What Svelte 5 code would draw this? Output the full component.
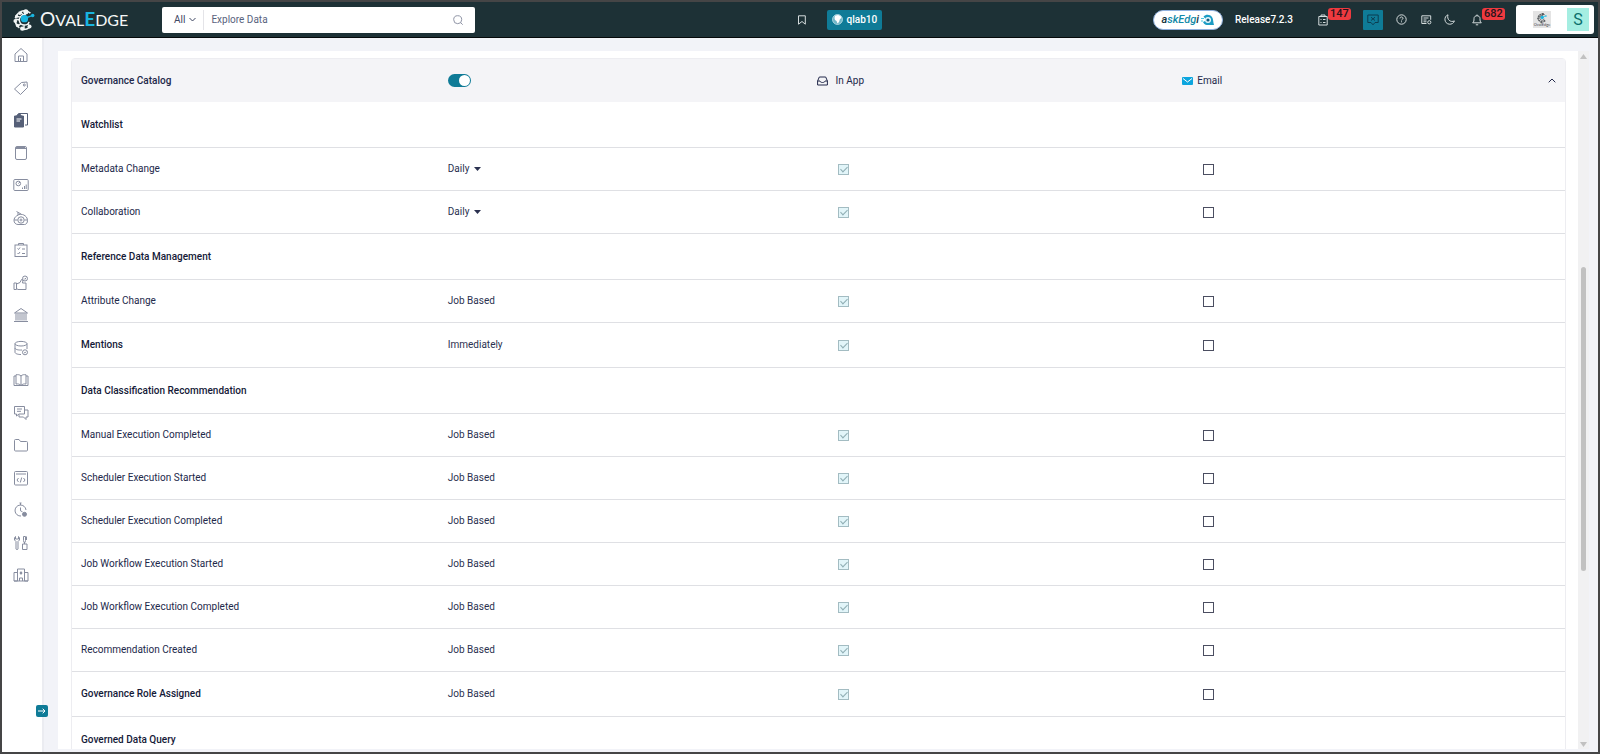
<script>
  const nav = [
    ['Home', '<path d="M2 7 8 1.5 14 7v7.5H2z"/><path d="M5.500 14.500V9h5v5.500M7.500 14V11"/>'],
    ['Tags', '<path d="M8.500 2.500 14 2l.5 5.500-7 7L1.500 9z"/><circle cx="11.300" cy="5" r="1"/>'],
    ['Data catalog', '<path d="M5.500 3V1.500h9V13H12"/><path fill="currentColor" d="M1.500 4h2l1-1.500h3L8.500 4h2v11h-9z"/><path stroke="#fff" d="M3.500 7h5M3.500 9h3.500"/>'],
    ['Glossary', '<rect x="2.500" y="1.500" width="11" height="13" rx="1.500"/><path d="M3 3.500h10M3 2.500h9"/>'],
    ['Dashboards', '<rect x=".8" y="2.500" width="14.400" height="11" rx="1"/><circle cx="5.300" cy="6.500" r="2.300"/><path d="M5.300 6.500 7 5M9.500 12v-1.500M11.500 12V9M13.200 12V7.500"/>'],
    ['Data quality', '<path d="M3.500 1.500 8 4M3.500 6 6 4.500c5-1 8.500 2.500 8.500 6 0 2-1 4-3 4H5c-2.500 0-4-2-4-4s1-3.500 2.500-4.500zM5 2.500v2.500"/><circle cx="8" cy="10" r="3.200"/><circle cx="8" cy="10" r="1"/><path d="M1 10h3.500M11.500 10h3"/>'],
    ['Projects', '<rect x="2" y="3" width="12" height="11.500"/><path d="M5.500 3V1.500h5V3M4.500 6.500l1 1 1.500-2M9 7h3M4.500 11l1 1 1.500-2M9 11.500h3"/>'],
    ['Service desk', '<path d="M1 8h2.500v6.500H1zM3.500 9 7 7.500 8.500 4.500l1.500.5-.5 3H13v6.500H5l-1.500-1"/><circle cx="12" cy="3.500" r="2.500"/><path d="m11 3.500.8.8 1.400-1.500"/>'],
    ['Governance', '<path d="M1.500 6 8 1.500 14.500 6zM1 14.500h14M3 6.500v7M5 6.500v7M7 6.500v7M9 6.500v7M11 6.500v7M13 6.500v7"/>'],
    ['Data sources', '<ellipse cx="8" cy="3.700" rx="6" ry="2.300"/><path d="M2 3.700v8.600c0 1.300 3 2.300 6 2.200M14 3.700V9M2 8c0 1.500 3.500 2.300 7 2"/><circle cx="12" cy="12.300" r="2.500"/><path d="M11 12.300l.8.700 1.200-1.300"/>'],
    ['Library', '<path d="M8 4C6.500 2.500 5 2.500 3 2.800V12c2-.3 3.500 0 5 1.500C9.500 12 11 11.700 13 12V2.800C11 2.500 9.500 2.500 8 4zM8 4v9M3 4H1v9.500h14V4h-2"/>'],
    ['Collaboration', '<path d="M1.500 1.500h10v7.500H6L3.500 11V9h-2zM11.500 5H15v7h-2v2.500L10.500 12H6V9.500"/><path d="M4 4h5M4 6.300h4"/>'],
    ['Files', '<path d="M1.500 3.500c0-.8.500-1 1-1h3.500l1.500 2h6c.7 0 1 .4 1 1v7.500c0 .7-.4 1-1 1h-11c-.6 0-1-.4-1-1z"/>'],
    ['Query sheet', '<rect x="1.500" y="1.500" width="13" height="13.500" rx="1"/><path d="M3 4h10M5.500 8 4 10l1.500 2M10.500 8l1.500 2-1.500 2M8.700 7.500 7.300 12.500"/>'],
    ['Jobs', '<path d="M13 8A5.500 5.500 0 1 0 8 14M6.500 1h2M7.500 1v2M7.500 5.500v3.300l2 1"/><circle cx="11.500" cy="12.300" r="2" fill="currentColor"/>'],
    ['Tools', '<path d="M2.500 1.500 1.500 3v2L3 6.500V14c0 .7 2 .7 2 0V6.500L6.500 5V3l-1-1.500V4h-3zM10.500 1.500h2v4l-.5 2h-1l-.5-2zM11.500 7.500V9M9.500 9H14v5.500H9.500zM13.500 1.500V5"/>'],
    ['Administration', '<path d="M4.500 14V2h7v12M1 5.500h3.500V14H1zM11.500 5.500H15V14h-3.500zM6.500 14v-3h3v3M1 14h14"/><path fill="currentColor" d="M7.300 5h1.400v2H7.300z"/>'],
  ];

  const rows = [
    { name: 'Watchlist', kind: 'group' },
    { name: 'Metadata Change', frequency: 'Daily', choose: true },
    { name: 'Collaboration', frequency: 'Daily', choose: true },
    { name: 'Reference Data Management', kind: 'group' },
    { name: 'Attribute Change', frequency: 'Job Based' },
    { name: 'Mentions', frequency: 'Immediately', kind: 'lead' },
    { name: 'Data Classification Recommendation', kind: 'group' },
    { name: 'Manual Execution Completed', frequency: 'Job Based' },
    { name: 'Scheduler Execution Started', frequency: 'Job Based' },
    { name: 'Scheduler Execution Completed', frequency: 'Job Based' },
    { name: 'Job Workflow Execution Started', frequency: 'Job Based' },
    { name: 'Job Workflow Execution Completed', frequency: 'Job Based' },
    { name: 'Recommendation Created', frequency: 'Job Based' },
    { name: 'Governance Role Assigned', frequency: 'Job Based', kind: 'lead' },
    { name: 'Governed Data Query', kind: 'group' },
  ];
</script>

{#snippet emblem(size, ink)}
  <svg width={size} height={size} viewBox="0 0 24 24" fill="none" stroke={ink} stroke-width="1.600" aria-hidden="true">
    <path d="M19 4.500A10 10 0 0 0 8 3M6 4.500A10 10 0 0 0 2.500 10M2.500 13.500A10 10 0 0 0 7 20.500M9.500 22A10 10 0 0 0 18 20"/>
    <path d="M12.500 6A6 6 0 0 0 7 13c.5 3 3 4.500 5.500 4.500 2.500 0 4.500-1.500 5-3.500M8 3l3 3.500M2.500 11 7 12M6 18l3-2M12 22v-4M18 19l-2-3M14 3l-1 4M4 8l4 1" />
    <g fill={ink} stroke="none">
      <circle cx="14" cy="3" r="2.800"/><circle cx="7.500" cy="4.500" r="2"/><circle cx="4" cy="8" r="1.800"/><circle cx="2.500" cy="13" r="2"/>
      <circle cx="5" cy="18" r="1.900"/><circle cx="10" cy="21.500" r="2.300"/><circle cx="18" cy="19" r="2.200"/>
    </g>
    <path stroke="#19b5e0" d="M12 10.500 21.500 7"/>
    <circle cx="12.500" cy="10.500" r="4" fill="#19b5e0" stroke="none"/>
    <circle cx="21.500" cy="7" r="1.900" fill="#19b5e0" stroke="none"/>
  </svg>
{/snippet}

<div class="frame">
  <header>
    <a class="brand" href="#home" aria-label="OvalEdge">
      {@render emblem(22, '#f1f5f5')}
      <span class="wordmark"><b>O</b>VAL<b class="cyan">E</b>DGE</span>
    </a>

    <form class="search" role="search">
      <button type="button" class="scope">All
        <svg width="7" height="5" viewBox="0 0 7 5" fill="none" stroke="currentColor"><path d="M.5 1l3 3 3-3"/></svg>
      </button>
      <input type="search" placeholder="Explore Data" aria-label="Explore Data" />
      <button type="button" class="find" aria-label="Search">
        <svg width="10" height="10" viewBox="0 0 10 10" fill="none" stroke="currentColor"><circle cx="4.700" cy="4.700" r="4"/><path d="M7.500 7.500 9.700 9.700"/></svg>
      </button>
    </form>

    <div class="middle">
      <button class="icon" aria-label="Bookmarks">
        <svg width="10" height="10" viewBox="0 0 10 10" fill="none" stroke="currentColor"><path d="M1.500.8h6.800v8.400L5 6.500 1.500 9.200z"/></svg>
      </button>
      <button class="tenant">
        <svg width="11" height="11" viewBox="0 0 11 11"><circle cx="5.500" cy="5.500" r="5" fill="#6fb6c8" stroke="#cfeaf0" stroke-width=".7"/><path fill="#fff" d="M3 1.800 6 1l2.500 1 1 2-1.500 1-1 3-1.500 1.500L4.500 7 3 6 2.500 4z"/></svg>
        qlab10
      </button>
    </div>

    <div class="tools">
      <button class="ask"><i>a<span>skEdg</span>i</i>
        <svg width="13" height="12" viewBox="0 0 13 12"><path fill="#1c9cc4" d="M2.500 2.500C5 0 9 .3 11 3c1.500 2 1 5 2 8H6C4 11 2.500 9.500 2 8l2-1 .5-2z"/><circle cx="7" cy="6" r="3" fill="#e8f8fc"/><circle cx="7" cy="6" r="1.600" fill="#125c80"/><path stroke="#46c7df" d="M0 4.500h3M0 7h2"/></svg>
      </button>
      <span class="release">Release7.2.3</span>
      <button class="icon tasks" aria-label="Tasks">
        <svg width="10" height="12" viewBox="0 0 10 12" fill="none" stroke="currentColor"><path d="M.8 2.500h8.400v8.500H.8zM3 2.500V1h4v1.500M2.500 5.500h1M5 5.500h2.500M2.500 8.500h1M5 8.500h2.500"/></svg>
        <span class="badge">147</span>
      </button>
      <button class="assist" aria-label="Assistant">
        <svg width="12" height="12" viewBox="0 0 12 12" fill="none" stroke="currentColor"><path d="M.8 1h10.400v7.500H8L6 10.800 4 8.500H.8zM4 3.200l4 3.300M4 6.500l4-3.300"/></svg>
      </button>
      <button class="icon help" aria-label="Help">
        <svg width="11" height="11" viewBox="0 0 11 11" fill="none" stroke="currentColor"><circle cx="5.500" cy="5.500" r="4.700"/><path d="M4 4.400c.1-2 3-1.800 3 0 0 .9-1.500 1-1.500 2M5.500 7.300v1"/></svg>
      </button>
      <button class="icon news" aria-label="Preferences">
        <svg width="11" height="10" viewBox="0 0 11 10" fill="none" stroke="currentColor"><path d="M5.500 8.500H.8V.8h8.900v4M2.500 3h5M2.500 5h3M2.500 6.800h3"/><circle cx="8.300" cy="7.300" r="1.600"/></svg>
      </button>
      <button class="icon night" aria-label="Dark mode">
        <svg width="11" height="11" viewBox="0 0 11 11" fill="none" stroke="currentColor"><path d="M4 .8C-.5 2.500 0 9.500 5.200 10.200c2.500.2 4.500-1 5.200-3.300C6.500 8.800 2.500 5.500 4 .8z"/></svg>
      </button>
      <button class="icon bell" aria-label="Notifications">
        <svg width="10" height="12" viewBox="0 0 10 12" fill="none" stroke="currentColor"><path d="M.7 8.800c1.300-1.200 1.300-2 1.300-4.300C2 .8 8 .8 8 4.500c0 2.300 0 3.100 1.300 4.300zM5 .5v1.200M3.800 10.800h2.400"/></svg>
        <span class="badge">682</span>
      </button>
      <div class="account">
        <span class="org">{@render emblem(10, '#55595c')}<small>OvalEdge</small></span>
        <button class="avatar">S</button>
      </div>
    </div>
  </header>

  <div class="body">
    <aside>
      <nav aria-label="Main">
        {#each nav as [label, art]}
          <a href="#{label}" aria-label={label} class:current={label === 'Data catalog'}>
            <svg width="16" height="16" viewBox="0 0 16 16" fill="none" stroke="currentColor">{@html art}</svg>
          </a>
        {/each}
      </nav>
      <button class="expand" aria-label="Expand menu">
        <svg width="8" height="6" viewBox="0 0 8 6" fill="none" stroke="currentColor"><path d="M0 3h7M4.700.7 7 3 4.700 5.300"/></svg>
      </button>
    </aside>

    <main>
      <div class="sheet">
        <table>
          <colgroup><col class="wide" /><col class="wide" /><col class="wide" /><col /></colgroup>
          <thead>
            <tr>
              <th scope="col">Governance Catalog</th>
              <th scope="col"><input class="switch" type="checkbox" role="switch" checked aria-label="Governance Catalog notifications" /></th>
              <th scope="col" class="channel"><span class="inapp">
                <svg width="11" height="10" viewBox="0 0 11 10" fill="none" stroke="currentColor"><path d="M.6 5 2.300 1h6.400l1.700 4v4H.6zM.6 5H3c.3 2 4.700 2 5 0h2.400"/></svg>
                In App</span></th>
              <th scope="col" class="channel"><div class="last">
                <span class="email">
                  <svg width="11" height="8" viewBox="0 0 11 8"><rect width="11" height="8" rx="1" fill="#0ca5de"/><path d="M1 1.500 5.500 5 10 1.500" fill="none" stroke="#fff"/></svg>
                  Email</span>
                <button class="fold" aria-label="Collapse section">
                  <svg width="8" height="5" viewBox="0 0 8 5" fill="none" stroke="currentColor"><path d="M.7 4.300 4 1l3.300 3.300"/></svg>
                </button>
              </div></th>
            </tr>
          </thead>
          <tbody>
            {#each rows as row}
              <tr class={row.kind}>
                {#if row.kind === 'group'}
                  <th scope="colgroup" colspan="4">{row.name}</th>
                {:else}
                  <th scope="row">{row.name}</th>
                  <td>
                    {#if row.choose}
                      <span class="pick">
                        <select aria-label="{row.name} frequency"><option>{row.frequency}</option></select>
                        <svg width="7" height="4" viewBox="0 0 7 4"><path d="M0 0h7L3.500 4z" fill="currentColor"/></svg>
                      </span>
                    {:else}{row.frequency}{/if}
                  </td>
                  <td class="tick"><input type="checkbox" checked disabled aria-label="{row.name} in app" /></td>
                  <td class="tick"><input type="checkbox" aria-label="{row.name} email" /></td>
                {/if}
              </tr>
            {/each}
          </tbody>
        </table>
      </div>
      <div class="track" aria-hidden="true">
        <svg width="7" height="5" viewBox="0 0 7 5"><path d="M0 5h7L3.500 0z" fill="#c1c1c1"/></svg>
        <div class="rail"><div class="thumb"></div></div>
        <svg width="7" height="5" viewBox="0 0 7 5"><path d="M0 0h7L3.500 5z" fill="#c1c1c1"/></svg>
      </div>
    </main>
  </div>
</div>

<style>
  :global(body) { background: #f2f3f8; }
  .frame, .frame * { box-sizing: border-box; }
  .frame {
    height: 100vh;
    display: flex;
    flex-direction: column;
    border: 2px solid #454546;
    background: #f2f3f8;
    color: #22284a;
    font: 10px/14px Roboto, sans-serif;
    overflow: hidden;
  }
  button, input, select { font: inherit; color: inherit; margin: 0; padding: 0; border: 0; background: none; }
  button { cursor: pointer; }
  svg { display: block; flex: none; }
  a { color: inherit; text-decoration: none; }

  header {
    flex: none;
    height: 36px;
    display: flex;
    align-items: center;
    background: #1d3136;
    border-bottom: 1px solid #05090a;
    color: #e3e9ea;
    padding-right: 4px;
  }
  .brand { display: flex; align-items: center; gap: 5px; width: 160px; padding-left: 11px; }
  .wordmark { font: 16px/24px Lato, sans-serif; color: #f4f7f7; }
  .wordmark b { font-size: 19px; font-weight: 400; }
  .wordmark .cyan { color: #19b5e0; font-weight: 700; }

  .search {
    width: 313px;
    height: 26px;
    display: flex;
    align-items: center;
    background: #fff;
    border-radius: 2px;
    color: #3f4763;
    padding-right: 12px;
  }
  .scope { display: flex; align-items: center; gap: 4px; height: 20px; padding: 0 7px 0 12px; border-right: 1px solid #e4e4e8; }
  .search input { flex: 1; min-width: 0; padding-left: 7px; outline: none; appearance: none; }
  .search input::placeholder { color: #59627d; opacity: 1; }
  .find { color: #9095a6; }

  .middle { flex: 1; display: flex; align-items: center; gap: 20px; }
  .middle::before { content: ''; flex: 30; }
  .middle::after { content: ''; flex: 25; }
  .tenant { display: flex; align-items: center; gap: 4px; height: 20px; padding: 0 5px; border-radius: 2px; background: #0f7b97; color: #fff; font-weight: 500; }
  .tools { display: flex; align-items: center; }
  .ask { display: flex; align-items: center; gap: 2px; height: 20px; padding: 0 8px 0 7px; border-radius: 10px; border: 1px solid #8fb0dd; background: #fff; color: #15323c; font-size: 11px; font-weight: 500; }
  .ask span { color: #128aa8; }
  .release { margin: 0 25px 0 12px; color: #fff; font-weight: 500; }
  .icon { position: relative; color: #d5dcdd; }
  .badge { position: absolute; left: 10px; top: -6px; height: 12px; padding: 0 2px; border-radius: 3px; background: #ee3a3f; color: #27141d; font-size: 11px; font-weight: 500; line-height: 12px; }
  .assist { display: grid; place-items: center; width: 20px; height: 20px; margin-left: 35px; border-radius: 1px; background: #0f7b97; color: #0b3d50; }
  .help { margin-left: 13px; }
  .news { margin-left: 14px; }
  .night { margin-left: 12px; }
  .bell { margin-left: 17px; }
  .account { display: flex; align-items: center; gap: 16px; height: 29px; margin-left: 34px; padding: 0 5px 0 17px; border-radius: 3px; background: #fff; }
  .org { display: flex; flex-direction: column; align-items: center; width: 18px; height: 17px; padding-top: 2px; background: #e4e4e4; color: #44484c; }
  .org small { font: 4px/4px Lato, sans-serif; }
  .avatar { width: 22px; height: 23px; background: #a5eee2; color: #0b6e6b; font-size: 16px; }

  .body { flex: 1; min-height: 0; display: flex; }
  aside { position: relative; flex: none; width: 42px; background: #fff; border-right: 2px solid #ebecf1; }
  nav { display: flex; flex-direction: column; padding-top: 1px; }
  nav a { display: grid; place-items: center; height: 32px; padding-right: 2px; color: #878d9f; }
  nav a:nth-child(even) { height: 33px; }
  nav a.current { color: #566078; }
  .expand { position: absolute; right: -6px; bottom: 35px; display: grid; place-items: center; width: 12px; height: 12px; border-radius: 2px; background: #0f7b97; color: #fff; }

  main { flex: 1; min-width: 0; display: flex; margin: 13px 9px 3px 14px; }
  .sheet { flex: 1; min-width: 0; overflow: hidden; padding: 7px 12px 0 13px; background: #fff; }
  table { width: 100%; table-layout: fixed; border-collapse: separate; border-spacing: 0; border: 1px solid #ededf1; border-radius: 4px 4px 0 0; }
  .wide { width: 24.500%; }
  th, td { height: 43px; padding: 0 0 0 9px; text-align: left; vertical-align: middle; font-weight: 400; border-bottom: 1px solid #dfe0e4; white-space: nowrap; }
  thead th { border-bottom: 0; background: #f4f4f7; font-weight: 500; }
  .group th { height: 46px; font-weight: 500; color: #151a38; }
  .lead th { height: 45px; font-weight: 500; color: #151a38; }
  td, thead th + th { padding-left: 10px; }
  td { color: #2b3150; }
  thead th.channel { padding-left: 13px; font-weight: 400; }
  .inapp, .email { display: flex; align-items: center; gap: 8px; }
  .email { gap: 4px; }
  .last { display: flex; align-items: center; justify-content: space-between; padding-right: 9px; }
  td.tick { padding-left: 34px; }
  .tick input { display: block; position: relative; appearance: none; width: 11px; height: 11px; border: 1px solid #4b4e61; background: #fff; }
  .tick input:disabled { border-color: #a3bcc2; background: #e2f5f9; }
  .tick input:disabled::after { content: ''; position: absolute; left: 3px; top: 0; width: 3px; height: 6px; border: solid #8fadb3; border-width: 0 1px 1px 0; transform: rotate(45deg); }
  .switch { display: block; position: relative; appearance: none; width: 23px; height: 13px; border-radius: 7px; background: #0f7b97; }
  .switch::after { content: ''; position: absolute; right: 1px; top: 1px; width: 11px; height: 11px; border-radius: 50%; background: #fff; }
  .pick { display: flex; align-items: center; gap: 4px; }
  select { appearance: none; outline: none; }

  .track { flex: none; width: 11px; display: flex; flex-direction: column; align-items: center; padding: 3px 0 2px; background: #f1f1f2; }
  .rail { flex: 1; width: 5px; padding-top: 208px; }
  .thumb { height: 64%; border-radius: 3px; background: #c1c1c1; }
</style>
